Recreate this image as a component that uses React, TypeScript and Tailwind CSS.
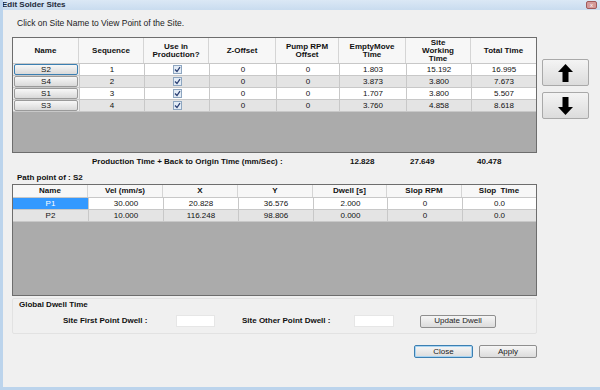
import type React from "react"

const sites = [
  { name: "S2", seq: 1, z: 0, pump: 0, empty: "1.803", work: "15.192", total: "16.995" },
  { name: "S4", seq: 2, z: 0, pump: 0, empty: "3.873", work: "3.800", total: "7.673" },
  { name: "S1", seq: 3, z: 0, pump: 0, empty: "1.707", work: "3.800", total: "5.507" },
  { name: "S3", seq: 4, z: 0, pump: 0, empty: "3.760", work: "4.858", total: "8.618" },
]

const points = [
  { name: "P1", vel: "30.000", x: "20.828", y: "36.576", dwell: "2.000", rpm: "0", time: "0.0" },
  { name: "P2", vel: "10.000", x: "116.248", y: "98.806", dwell: "0.000", rpm: "0", time: "0.0" },
]

const siteCols = "grid-cols-[66px_65px_65px_67px_63px_67px_65px_1fr]"
const pointCols = "grid-cols-[75px_75px_75px_75px_74px_75px_1fr]"

const Check = () => (
  <span className="w-[9px] h-[9px] border border-[#8ea6c0] bg-[#e3ecf6] flex items-center justify-center">
    <svg width="7" height="7" viewBox="0 0 7 7">
      <path d="M1 3.5 L3 5.5 L6 1.2" stroke="#2a3f73" strokeWidth="1.3" fill="none" />
    </svg>
  </span>
)

const Arrow: React.FC<{ down?: boolean }> = ({ down }) => (
  <svg width="15" height="18" viewBox="0 0 15 18" className={down ? "rotate-180" : ""}>
    <path d="M7.5 0 L15 8 L10.5 8 L10.5 18 L4.5 18 L4.5 8 L0 8 Z" fill="#000" />
  </svg>
)

const WinButton: React.FC<{ label: string; def?: boolean; w: string }> = ({ label, def, w }) => (
  <button
    className={`${w} h-[13px] text-[8px] font-normal leading-none rounded-[2px] border bg-gradient-to-b from-[#f6f6f6] to-[#dcdcdc] text-[#222] ${
      def ? "border-[#3c7fb1] shadow-[inset_0_0_0_1px_#a8d4f2]" : "border-[#8f8f8f]"
    }`}
  >
    {label}
  </button>
)

export default function App() {
  return (
    <div
      className="w-[600px] h-[390px] bg-[#f0f0f0] flex flex-col border-l-[3px] border-b-[3px] border-[#bcd4ec] text-[#111] overflow-hidden"
      style={{ fontFamily: '"Liberation Sans", Arial, sans-serif' }}
    >
      {/* title bar */}
      <div className="h-[10px] shrink-0 bg-gradient-to-b from-[#dbe8f5] to-[#c9dcef] flex items-center justify-between -ml-[3px] pl-[2px] pr-[3px]">
        <span className="text-[8px] font-bold text-[#1e2a3a] leading-none">Edit Solder Sites</span>
        <span className="w-[11px] h-[8px] rounded-[2px] bg-[#d49a9a] border border-[#a05a5a] text-[6px] leading-none text-white flex items-center justify-center">
          x
        </span>
      </div>

      <div className="pl-[9px] flex flex-col">
        <div className="h-[27px] flex items-center pl-[5px] text-[8.5px] text-[#222]">
          Click on Site Name to View Point of the Site.
        </div>

        <div className="flex gap-[5px]">
          {/* sites grid */}
          <div className="w-[525px] h-[116px] border border-[#6d6d6d] bg-[#ababab] flex flex-col">
            <div className={`grid ${siteCols} h-[25px] bg-[#f7f7f7] text-[8px] font-bold leading-[8px] text-center`}>
              {["Name", "Sequence", "Use in\nProduction?", "Z-Offset", "Pump RPM\nOffset", "EmptyMove\nTime", "Site\nWorking\nTime", "Total  Time"].map((h) => (
                <div key={h} className="border-r border-[#d5d5d5] last:border-r-0 flex items-center justify-center whitespace-pre-line">
                  {h}
                </div>
              ))}
            </div>
            {sites.map((s, i) => (
              <div
                key={s.name}
                className={`grid ${siteCols} h-[12px] text-[8px] leading-none text-center border-t border-[#c8c8c8] ${
                  i % 2 ? "bg-[#e4e4e4]" : "bg-white"
                }`}
              >
                <div className="bg-[#ececec] px-[1px] flex items-center">
                  <span
                    className={`w-full h-[11px] flex items-center justify-center rounded-[2px] border bg-gradient-to-b from-[#f8f8f8] to-[#d9d9d9] ${
                      i === 0 ? "border-[#3c7fb1]" : "border-[#9a9a9a]"
                    }`}
                  >
                    {s.name}
                  </span>
                </div>
                <div className="border-l border-[#c8c8c8] flex items-center justify-center">{s.seq}</div>
                <div className="border-l border-[#c8c8c8] flex items-center justify-center">
                  <Check />
                </div>
                <div className="border-l border-[#c8c8c8] flex items-center justify-center">{s.z}</div>
                <div className="border-l border-[#c8c8c8] flex items-center justify-center">{s.pump}</div>
                <div className="border-l border-[#c8c8c8] flex items-center justify-center">{s.empty}</div>
                <div className="border-l border-[#c8c8c8] flex items-center justify-center">{s.work}</div>
                <div className="border-l border-[#c8c8c8] flex items-center justify-center">{s.total}</div>
              </div>
            ))}
            <div className="flex-1 border-t border-[#c8c8c8]" />
          </div>

          {/* move buttons */}
          <div className="pt-[22px] flex flex-col gap-[6px]">
            {[false, true].map((d) => (
              <button
                key={String(d)}
                className="w-[47px] h-[27px] rounded-[2px] border border-[#a9a9a9] bg-gradient-to-b from-[#f4f4f4] to-[#dcdcdc] flex items-center justify-center"
              >
                <Arrow down={d} />
              </button>
            ))}
          </div>
        </div>

        {/* totals */}
        <div className="h-[18px] flex items-center pl-[80px] text-[8px] font-bold">
          <span className="w-[258px]">Production Time + Back to Origin Time (mm/Sec) :</span>
          <span className="w-[60px]">12.828</span>
          <span className="w-[67px]">27.649</span>
          <span>40.478</span>
        </div>

        <div className="h-[13px] flex items-center pl-[5px] text-[8px] font-bold">Path point of : S2</div>

        {/* points grid */}
        <div className="w-[525px] h-[112px] border border-[#6d6d6d] bg-[#ababab] flex flex-col">
          <div className={`grid ${pointCols} h-[12px] bg-[#f7f7f7] text-[8px] font-bold leading-none text-center`}>
            {["Name", "Vel (mm/s)", "X", "Y", "Dwell [s]", "Slop RPM", "Slop  Time"].map((h) => (
              <div key={h} className="border-r border-[#d5d5d5] last:border-r-0 flex items-center justify-center whitespace-pre">
                {h}
              </div>
            ))}
          </div>
          {points.map((p, i) => (
            <div
              key={p.name}
              className={`grid ${pointCols} h-[12px] text-[8px] leading-none text-center border-t border-[#c8c8c8] ${
                i % 2 ? "bg-[#e4e4e4]" : "bg-white"
              }`}
            >
              <div className={`flex items-center justify-center ${i === 0 ? "bg-[#3399ff] text-white" : "bg-[#e4e4e4]"}`}>{p.name}</div>
              <div className="border-l border-[#c8c8c8] flex items-center justify-center">{p.vel}</div>
              <div className="border-l border-[#c8c8c8] flex items-center justify-center">{p.x}</div>
              <div className="border-l border-[#c8c8c8] flex items-center justify-center">{p.y}</div>
              <div className="border-l border-[#c8c8c8] flex items-center justify-center">{p.dwell}</div>
              <div className="border-l border-[#c8c8c8] flex items-center justify-center">{p.rpm}</div>
              <div className="border-l border-[#c8c8c8] flex items-center justify-center">{p.time}</div>
            </div>
          ))}
          <div className="flex-1 border-t border-[#c8c8c8]" />
        </div>

        {/* global dwell */}
        <div className="mt-[2px] w-[525px] h-[36px] border border-[#e2e2e2] rounded-[2px] flex flex-col">
          <div className="h-[10px] flex items-end pl-[6px] text-[8px] font-bold leading-none">Global Dwell Time</div>
          <div className="flex-1 flex items-center text-[8px] font-bold">
            <span className="pl-[50px] w-[163px]">Site First Point Dwell :</span>
            <span className="w-[39px] h-[12px] bg-white border border-[#e6e6e6]" />
            <span className="pl-[27px] w-[139px]">Site Other Point Dwell :</span>
            <span className="w-[40px] h-[12px] bg-white border border-[#e6e6e6]" />
            <span className="ml-[26px] flex">
              <WinButton label="Update Dwell" w="w-[76px]" />
            </span>
          </div>
        </div>

        {/* dialog buttons */}
        <div className="w-[525px] flex justify-end gap-[6px] mt-[11px]">
          <WinButton label="Close" def w="w-[59px]" />
          <WinButton label="Apply" w="w-[58px]" />
        </div>
      </div>
    </div>
  )
}
